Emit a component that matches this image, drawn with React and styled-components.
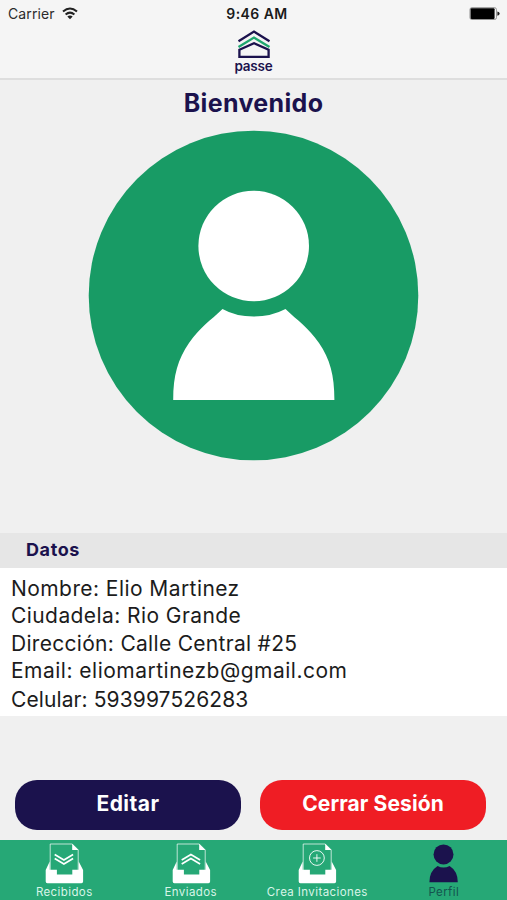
import React from 'react';
import styled, { createGlobalStyle } from 'styled-components';

const navy = '#1b124d';

const GlobalStyle = createGlobalStyle`
  * {
    box-sizing: border-box;
  }
  body {
    margin: 0;
    background: #f0f0f0;
    font-family: Inter, "Liberation Sans", sans-serif;
  }
`;

const Screen = styled.div`
  display: flex;
  flex-direction: column;
  width: 507px;
  height: 900px;
  background: #f0f0f0;
  overflow: hidden;
`;

const Header = styled.header`
  height: 80px;
  flex-shrink: 0;
  background: #f5f5f5;
  border-bottom: 2px solid #dedede;
`;

const StatusBar = styled.div`
  display: grid;
  grid-template-columns: 1fr auto 1fr;
  align-items: center;
  height: 27px;
  padding: 0 7px 0 8px;
`;

const Carrier = styled.div`
  display: flex;
  align-items: center;
  gap: 7px;
  font-size: 14px;
  letter-spacing: 0.1px;
  color: #2b2b2b;
`;

const Clock = styled.div`
  font-size: 14px;
  font-weight: 600;
  letter-spacing: 0.45px;
  color: #1a1a1a;
  padding-left: 6px;
`;

const Battery = styled.svg`
  justify-self: end;
`;

const Brand = styled.div`
  display: flex;
  flex-direction: column;
  align-items: center;
  padding-top: 2px;
`;

const BrandName = styled.span`
  font-size: 13.5px;
  line-height: 15px;
  font-weight: 600;
  letter-spacing: -0.2px;
  color: ${navy};
`;

const Title = styled.h1`
  margin: 0;
  height: 50px;
  flex-shrink: 0;
  font-size: 25px;
  line-height: 46px;
  font-weight: 700;
  letter-spacing: 0.35px;
  text-align: center;
  color: ${navy};
`;

const Avatar = styled.svg`
  display: block;
  flex-shrink: 0;
  align-self: center;
`;

const SectionTitle = styled.h2`
  margin: 72px 0 0;
  height: 35px;
  flex-shrink: 0;
  padding-left: 26px;
  background: #e6e6e6;
  font-size: 18px;
  line-height: 34px;
  font-weight: 700;
  letter-spacing: 0.6px;
  color: ${navy};
`;

const Details = styled.div`
  height: 148px;
  flex-shrink: 0;
  padding: 7px 11px 0;
  background: #fff;
`;

const Detail = styled.div`
  height: ${(p) => p.$height || 27}px;
  font-size: 21px;
  line-height: 28px;
  letter-spacing: ${(p) => p.$spacing}px;
  white-space: nowrap;
  color: #1c1c1c;
`;

const Actions = styled.div`
  display: flex;
  gap: 19px;
  padding: 64px 21px 0 15px;
  height: 124px;
  flex-shrink: 0;
`;

const Button = styled.button`
  flex: 1;
  height: 50px;
  padding: 0 0 3px;
  border: none;
  border-radius: 22px;
  background: ${(p) => p.$color};
  color: #fff;
  font-family: inherit;
  font-size: 21px;
  font-weight: 700;
  letter-spacing: ${(p) => p.$spacing}px;
  cursor: pointer;
`;

const TabBar = styled.nav`
  display: grid;
  grid-template-columns: repeat(4, 1fr);
  height: 60px;
  flex-shrink: 0;
  padding: 3px 0 0 1px;
  background: #26a876;
`;

const Tab = styled.div`
  display: flex;
  flex-direction: column;
  align-items: center;
  font-size: 11.5px;
  line-height: 14px;
  letter-spacing: 0.4px;
  white-space: nowrap;
  color: ${(p) => (p.$active ? '#14544f' : '#d8f5e8')};
`;

const Wifi = () => (
  <svg width="16" height="13" viewBox="0 0 16 13" fill="none" stroke="#222" strokeWidth="2">
    <path d="M1 4.6 Q8 -1.6 15 4.6" />
    <path d="M3.6 7.5 Q8 3.7 12.4 7.5" />
    <path d="M8 12.2 L5.3 9.4 Q8 7.4 10.7 9.4 Z" fill="#222" stroke="none" />
  </svg>
);

const Logo = () => (
  <svg width="34" height="30" viewBox="0 0 34 30" fill="none" strokeWidth="2.3">
    <path d="M1.5 12.2 L17 2.6 L32.5 12.2" stroke={navy} />
    <path d="M1.5 18 L17 8.6 L32.5 18" stroke="#1fa76f" />
    <path d="M2.4 20.8 L17 14.2 L31.6 20.8 V27.8 H2.4 Z" stroke={navy} />
  </svg>
);

const InboxIcon = ({ children }) => (
  <svg width="40" height="42" viewBox="-0.7 0 40 42" fill="none" stroke="#fff">
    <path d="M5.5 27 V1 H27.5 L33.5 7 V27" strokeWidth="0.7" />
    <path d="M27.5 0.8 V7 H33.8 Z" fill="#fff" stroke="none" />
    <path
      d="M5 18.5 L1 27 V38.6 Q1 40.3 2.7 40.3 H36.7 Q38.4 40.3 38.4 38.6 V27 L34 18.5 V26.8 H27.6 V31.4 H12.2 V26.8 H5 Z"
      fill="#fff"
      stroke="none"
    />
    {children}
  </svg>
);

const PersonIcon = () => (
  <svg width="40" height="42" viewBox="0 0 40 42" fill={navy}>
    <circle cx="19.5" cy="11.4" r="10" />
    <path d="M5.4 39.2 Q5.4 28 13.6 22.9 Q19.5 26 25.6 22.9 Q33.8 28 33.8 39.2 Z" />
  </svg>
);

const details = [
  { text: 'Nombre: Elio Martinez', spacing: 0.43 },
  { text: 'Ciudadela: Rio Grande', spacing: 0.42, height: 28 },
  { text: 'Dirección: Calle Central #25', spacing: 0.3 },
  { text: 'Email: eliomartinezb@gmail.com', spacing: 0.49, height: 29 },
  { text: 'Celular: 593997526283', spacing: 0.1 },
];

const App = () => {
  return (
    <Screen>
      <GlobalStyle />
      <Header>
        <StatusBar>
          <Carrier>
            <span>Carrier</span>
            <Wifi />
          </Carrier>
          <Clock>9:46 AM</Clock>
          <Battery width="31" height="13" viewBox="0 0 31 13">
            <rect x="1" y="0.7" width="26.4" height="11.8" rx="1.8" fill="#fff" stroke="#777" strokeWidth="0.8" />
            <rect x="1.6" y="1.2" width="24" height="10.8" rx="1" fill="#000" />
            <path d="M28.4 4.5 Q30.6 4.8 30.6 6.6 Q30.6 8.4 28.4 8.7 Z" fill="#222" />
          </Battery>
        </StatusBar>
        <Brand>
          <Logo />
          <BrandName>passe</BrandName>
        </Brand>
      </Header>

      <Title>Bienvenido</Title>
      <Avatar width="331" height="331" viewBox="0 0 331 331">
        <circle cx="165.5" cy="165.5" r="164.8" fill="#189b65" />
        <circle cx="165.7" cy="116" r="55.3" fill="#fff" />
        <path
          d="M134.5 179 Q148 186.6 165.7 186.6 Q183 186.6 197.5 179 C210 191 220 197 231 213 C242 229 246.4 245 246.4 270 H85.2 C85.2 245 90 229 101 213 C112 197 122 191 134.5 179 Z"
          fill="#fff"
        />
      </Avatar>

      <SectionTitle>Datos</SectionTitle>
      <Details>
        {details.map((item) => (
          <Detail key={item.text} $spacing={item.spacing} $height={item.height}>
            {item.text}
          </Detail>
        ))}
      </Details>

      <Actions>
        <Button $color={navy} $spacing={0.5}>Editar</Button>
        <Button $color="#ef1d24" $spacing={0.1}>Cerrar Sesión</Button>
      </Actions>

      <TabBar>
        <Tab>
          <InboxIcon>
            <path d="M10 11.4 L19.2 16.9 L28.4 11.4 M10 15.4 L19.2 20.9 L28.4 15.4" strokeWidth="1.7" />
          </InboxIcon>
          Recibidos
        </Tab>
        <Tab>
          <InboxIcon>
            <path d="M10 16.9 L19.2 11.4 L28.4 16.9 M10 20.9 L19.2 15.4 L28.4 20.9" strokeWidth="1.7" />
          </InboxIcon>
          Enviados
        </Tab>
        <Tab>
          <InboxIcon>
            <circle cx="19.2" cy="15" r="7.4" strokeWidth="0.9" />
            <path d="M19.2 11.2 V18.8 M15.4 15 H23" strokeWidth="0.9" />
          </InboxIcon>
          Crea Invitaciones
        </Tab>
        <Tab $active>
          <PersonIcon />
          Perfil
        </Tab>
      </TabBar>
    </Screen>
  );
};

export default App;
